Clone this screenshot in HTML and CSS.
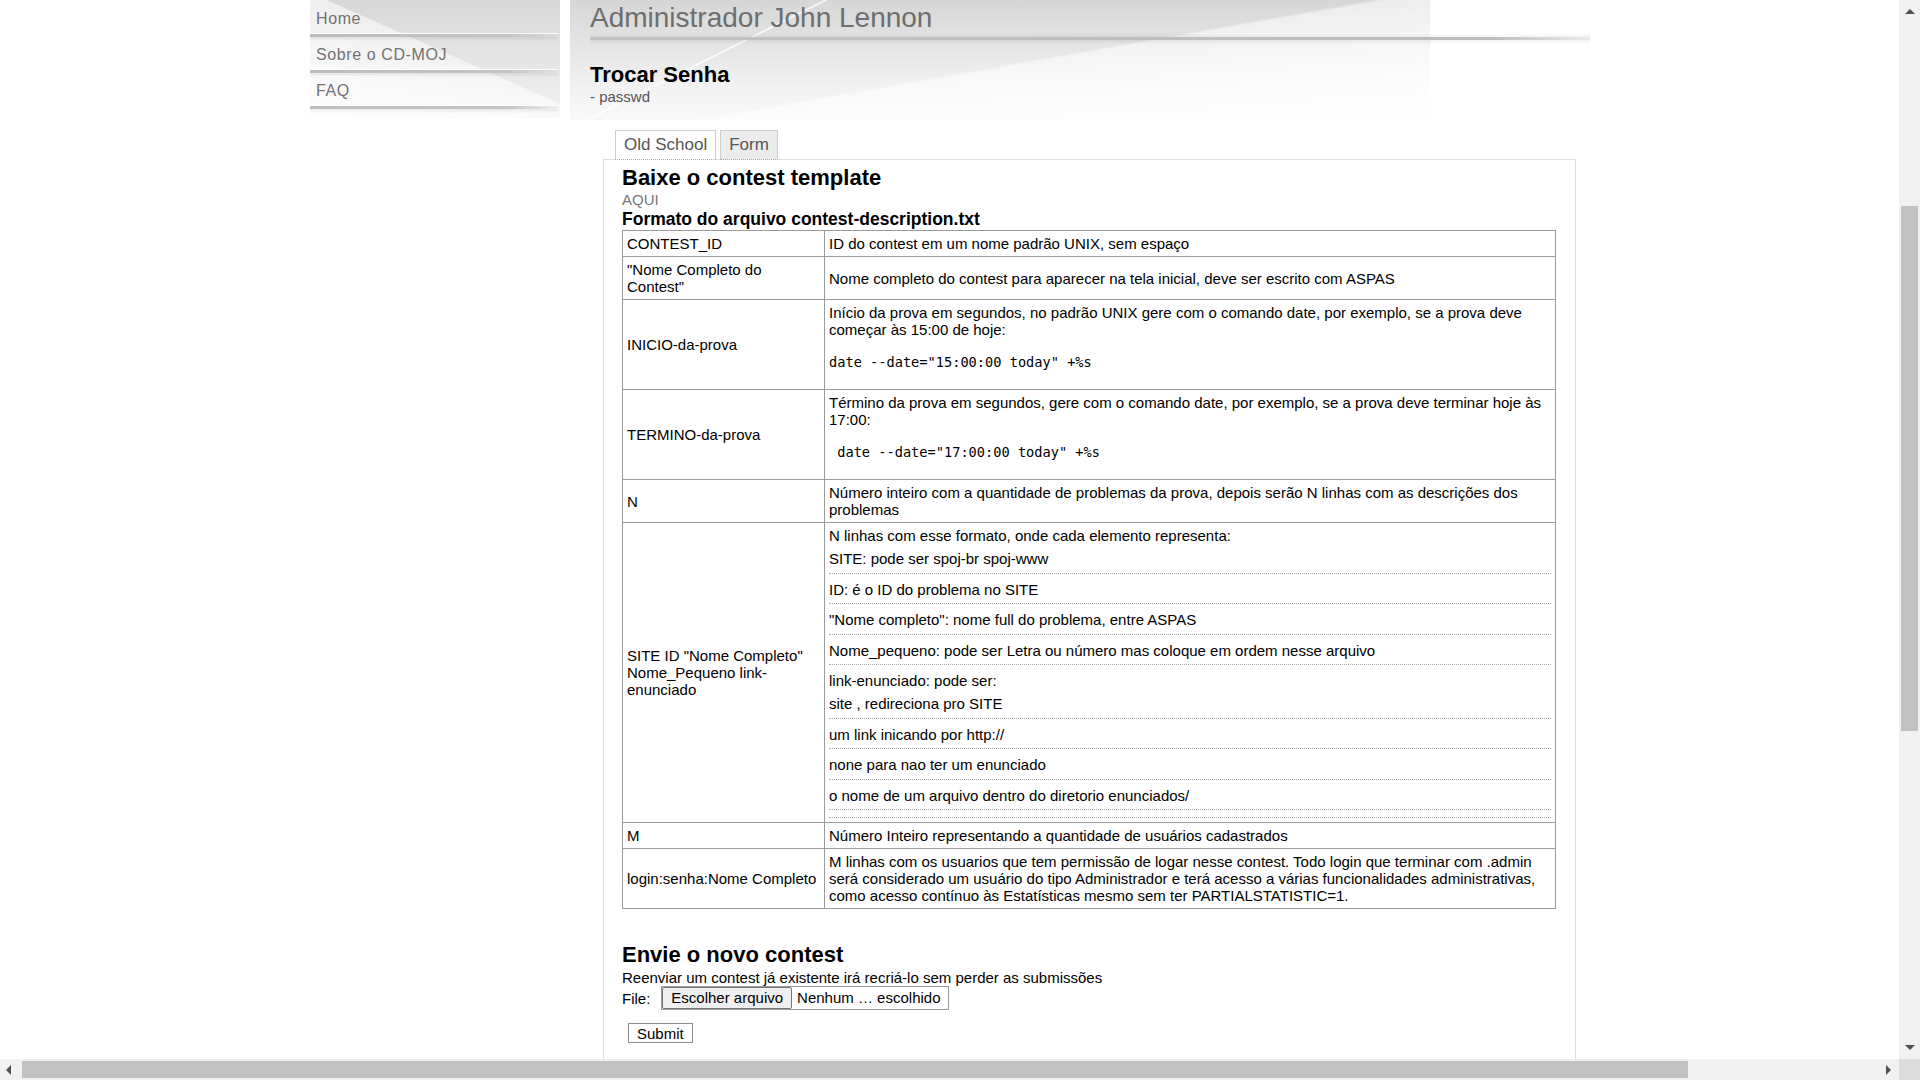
FILE: index.html
```html
<!DOCTYPE html>
<html lang="pt-BR">
<head>
<meta charset="utf-8">
<title>CD-MOJ - Trocar Senha</title>
<link rel="stylesheet" href="styles.css">
</head>
<body>
<div class="page">
  <nav class="menu">
    <a class="menu-item" href="#">Home</a>
    <a class="menu-item" href="#">Sobre o CD-MOJ</a>
    <a class="menu-item" href="#">FAQ</a>
  </nav>
  <div class="main">
    <header class="header">
      <h1 class="site-title">Administrador John Lennon</h1>
      <div class="title-rule"></div>
      <h2 class="page-title">Trocar Senha</h2>
      <div class="page-sub">- passwd</div>
    </header>
    <div class="tabs">
      <span class="tab">Old School</span>
      <span class="tab alt">Form</span>
    </div>
    <section class="panel">
      <h2 class="sec-title">Baixe o contest template</h2>
      <a class="aqui" href="#">AQUI</a>
      <h3 class="fmt-title">Formato do arquivo contest-description.txt</h3>
      <table class="fmt">
        <colgroup><col class="c1"><col class="c2"></colgroup>
        <tr><td>CONTEST_ID</td><td>ID do contest em um nome padrão UNIX, sem espaço</td></tr>
        <tr><td>"Nome Completo do Contest"</td><td>Nome completo do contest para aparecer na tela inicial, deve ser escrito com ASPAS</td></tr>
        <tr><td>INICIO-da-prova</td><td>Início da prova em segundos, no padrão UNIX gere com o comando date, por exemplo, se a prova deve começar às 15:00 de hoje:<pre class="code">date --date="15:00:00 today" +%s</pre></td></tr>
        <tr><td>TERMINO-da-prova</td><td>Término da prova em segundos, gere com o comando date, por exemplo, se a prova deve terminar hoje às 17:00:<pre class="code"> date --date="17:00:00 today" +%s</pre></td></tr>
        <tr><td>N</td><td>Número inteiro com a quantidade de problemas da prova, depois serão N linhas com as descrições dos problemas</td></tr>
        <tr><td>SITE ID "Nome Completo" Nome_Pequeno link-enunciado</td><td>
          <div class="items">
            <div class="it first"><span>N linhas com esse formato, onde cada elemento representa:</span><span>SITE: pode ser spoj-br spoj-www</span></div>
            <div class="it"><span>ID: é o ID do problema no SITE</span></div>
            <div class="it"><span>"Nome completo": nome full do problema, entre ASPAS</span></div>
            <div class="it"><span>Nome_pequeno: pode ser Letra ou número mas coloque em ordem nesse arquivo</span></div>
            <div class="it"><span>link-enunciado: pode ser:</span><span>site , redireciona pro SITE</span></div>
            <div class="it"><span>um link inicando por http://</span></div>
            <div class="it"><span>none para nao ter um enunciado</span></div>
            <div class="it"><span>o nome de um arquivo dentro do diretorio enunciados/</span></div>
            <div class="it empty"></div>
          </div>
        </td></tr>
        <tr><td>M</td><td>Número Inteiro representando a quantidade de usuários cadastrados</td></tr>
        <tr><td>login:senha:Nome Completo</td><td>M linhas com os usuarios que tem permissão de logar nesse contest. Todo login que terminar com .admin será considerado um usuário do tipo Administrador e terá acesso a várias funcionalidades administrativas, como acesso contínuo às Estatísticas mesmo sem ter PARTIALSTATISTIC=1.</td></tr>
      </table>
      <h2 class="sec-title send">Envie o novo contest</h2>
      <p class="note">Reenviar um contest já existente irá recriá-lo sem perder as submissões</p>
      <div class="file-row">
        <span class="file-label">File:</span>
        <span class="file"><span class="file-btn">Escolher arquivo</span><span class="file-name">Nenhum … escolhido</span></span>
      </div>
      <div class="submit-row"><button class="submit" type="button">Submit</button></div>
    </section>
  </div>
</div>

<div class="vscroll">
  <span class="arrow up"></span>
  <span class="vthumb"></span>
  <span class="arrow down"></span>
</div>
<div class="hscroll">
  <span class="arrow left"></span>
  <span class="hthumb"></span>
  <span class="arrow right"></span>
</div>
<div class="corner"></div>
</body>
</html>
```

FILE: styles.css
```css
html, body {
  margin: 0;
  padding: 0;
  overflow: hidden;
  background: #fff;
}
body {
  font-family: "Liberation Sans", Arial, sans-serif;
  font-size: 15px;
  line-height: 17px;
  color: #000;
  width: 1920px;
  height: 1080px;
}

.page {
  display: flex;
  align-items: flex-start;
  padding-left: 310px;
}

/* ---------- left menu ---------- */
.menu {
  width: 250px;
  flex: none;
  height: 118px;
  padding-top: 1px;
  box-sizing: border-box;
  display: flex;
  flex-direction: column;
  background:
    linear-gradient(24deg, rgba(255,255,255,0.85) 0%, rgba(255,255,255,0.55) 54.4%, rgba(255,255,255,0) 55%),
    linear-gradient(to bottom, #d8d8d8 0%, #e4e4e4 50%, #f3f3f3 100%);
}
.menu-item {
  display: flex;
  flex-direction: column;
  height: 36px;
  box-sizing: border-box;
  padding: 9px 0 0 6px;
  font-size: 16px;
  line-height: 18px;
  letter-spacing: 0.6px;
  color: #727272;
  text-decoration: none;
}
.menu-item::after {
  content: "";
  display: block;
  margin-top: auto;
  margin-left: -6px;
  width: 248px;
  height: 3px;
  background: linear-gradient(to right, #bdbdbd 0%, #c4c4c4 80%, rgba(200,200,200,0.2) 100%);
  box-shadow: 0 -1px 0 rgba(255,255,255,0.9), 0 2px 3px rgba(0,0,0,0.08);
}

/* ---------- header ---------- */
.main {
  width: 1025px;
  flex: none;
  margin-left: 10px;
}
.header {
  height: 120px;
  box-sizing: border-box;
  padding: 2px 0 0 20px;
  background-image:
    linear-gradient(153.4deg, rgba(255,255,255,0) 23%, rgba(255,255,255,0.95) 23.25%, rgba(255,255,255,0) 23.6%),
    linear-gradient(170deg, rgba(255,255,255,0) 52%, rgba(255,255,255,0.55) 53%, rgba(255,255,255,0.9) 100%),
    linear-gradient(to bottom, #d6d6d6 0%, #e3e3e3 35%, #f1f1f1 70%, #f8f8f8 100%);
  background-size: 860px 120px;
  background-repeat: no-repeat;
}
.site-title {
  margin: 0;
  font-size: 28px;
  line-height: 32px;
  font-weight: normal;
  color: #6e6e6e;
}
.title-rule {
  width: 1000px;
  height: 3px;
  margin-top: 3px;
  background: linear-gradient(to right, #c2c2c2 0%, #bcbcbc 90%, rgba(190,190,190,0.3) 100%);
  box-shadow: 0 -2px 3px rgba(0,0,0,0.05), 0 2px 3px rgba(0,0,0,0.07);
}
.page-title {
  margin: 22px 0 0;
  font-size: 22px;
  line-height: 25px;
  font-weight: bold;
}
.page-sub {
  margin-top: 1px;
  color: #555;
}

/* ---------- tabs ---------- */
.tabs {
  display: flex;
  gap: 4px;
  padding-left: 45px;
  margin-top: 10px;
  position: relative;
  z-index: 1;
}
.tab {
  height: 30px;
  box-sizing: border-box;
  border: 1px solid #cdcdcd;
  border-bottom: 1px dotted #a9a9a9;
  padding: 0 8px;
  line-height: 28px;
  font-size: 17px;
  color: #555;
  background: #fff;
  margin-bottom: -1px;
}
.tab.alt {
  background: #ececec;
}

/* ---------- panel ---------- */
.panel {
  margin-left: 33px;
  width: 973px;
  box-sizing: border-box;
  border: 1px solid #dedede;
  padding: 7px 19px 60px 18px;
}
.sec-title {
  margin: 0;
  font-size: 22px;
  line-height: 22px;
  font-weight: bold;
}
.aqui {
  display: block;
  margin-top: 2px;
  color: #777;
  text-decoration: none;
}
.fmt-title {
  margin: 1px 0 1px;
  font-size: 17.5px;
  line-height: 20px;
  font-weight: bold;
}

.fmt {
  width: 934px;
  border-collapse: collapse;
  table-layout: fixed;
}
.fmt col.c1 { width: 202px; }
.fmt td {
  border: 1px solid #9b9b9b;
  padding: 4px;
  vertical-align: middle;
  line-height: 17px;
}
.code {
  margin: 17px 0 15px;
  font-family: "DejaVu Sans Mono", monospace;
  font-size: 13.65px;
  line-height: 15px;
}
.items {
  display: flex;
  flex-direction: column;
}
.it {
  display: flex;
  flex-direction: column;
  gap: 6px;
  padding: 7px 0 5.5px;
  border-bottom: 1px dotted #a8a8a8;
}
.it.first {
  padding-top: 0;
}
.it.empty {
  padding: 7px 0 0;
}

.send {
  margin-top: 35px;
  margin-bottom: 3px;
}
.note {
  margin: 0;
}
.file-row {
  display: flex;
  align-items: center;
  height: 24px;
}
.file {
  display: flex;
  margin-left: 11px;
  height: 24px;
  box-sizing: border-box;
  border: 1px solid #9a9a9a;
}
.file-btn {
  border: 1px solid #767676;
  border-radius: 2px;
  background: #efefef;
  padding: 0 8px;
  line-height: 20px;
}
.file-name {
  padding: 0 7px 0 5px;
  line-height: 22px;
}
.submit-row {
  padding: 13px 0 0 6px;
}
.submit {
  font-family: "Liberation Sans", Arial, sans-serif;
  font-size: 15px;
  line-height: 17px;
  height: 20px;
  padding: 0 8px;
  border: 1px solid #8c8c8c;
  border-radius: 0;
  background: #fff;
  color: #000;
}

/* ---------- scrollbars ---------- */
.vscroll {
  position: fixed;
  top: 0;
  right: 0;
  width: 21px;
  height: 1059px;
  background: #f1f1f1;
}
.hscroll {
  position: fixed;
  left: 0;
  bottom: 0;
  width: 1899px;
  height: 21px;
  background: #f1f1f1;
}
.corner {
  position: fixed;
  right: 0;
  bottom: 0;
  width: 21px;
  height: 21px;
  background: #dcdcdc;
}
.vthumb {
  position: absolute;
  left: 2px;
  top: 206px;
  width: 17px;
  height: 525px;
  background: #c1c1c1;
}
.hthumb {
  position: absolute;
  top: 2px;
  left: 22px;
  width: 1666px;
  height: 17px;
  background: #c1c1c1;
}
.arrow {
  position: absolute;
  width: 0;
  height: 0;
}
.arrow.up {
  left: 6px;
  top: 9px;
  border-left: 5px solid transparent;
  border-right: 5px solid transparent;
  border-bottom: 5px solid #505050;
}
.arrow.down {
  left: 6px;
  bottom: 9px;
  border-left: 5px solid transparent;
  border-right: 5px solid transparent;
  border-top: 5px solid #505050;
}
.arrow.left {
  left: 6px;
  top: 6px;
  border-top: 5px solid transparent;
  border-bottom: 5px solid transparent;
  border-right: 5px solid #505050;
}
.arrow.right {
  right: 8px;
  top: 6px;
  border-top: 5px solid transparent;
  border-bottom: 5px solid transparent;
  border-left: 5px solid #505050;
}
```
